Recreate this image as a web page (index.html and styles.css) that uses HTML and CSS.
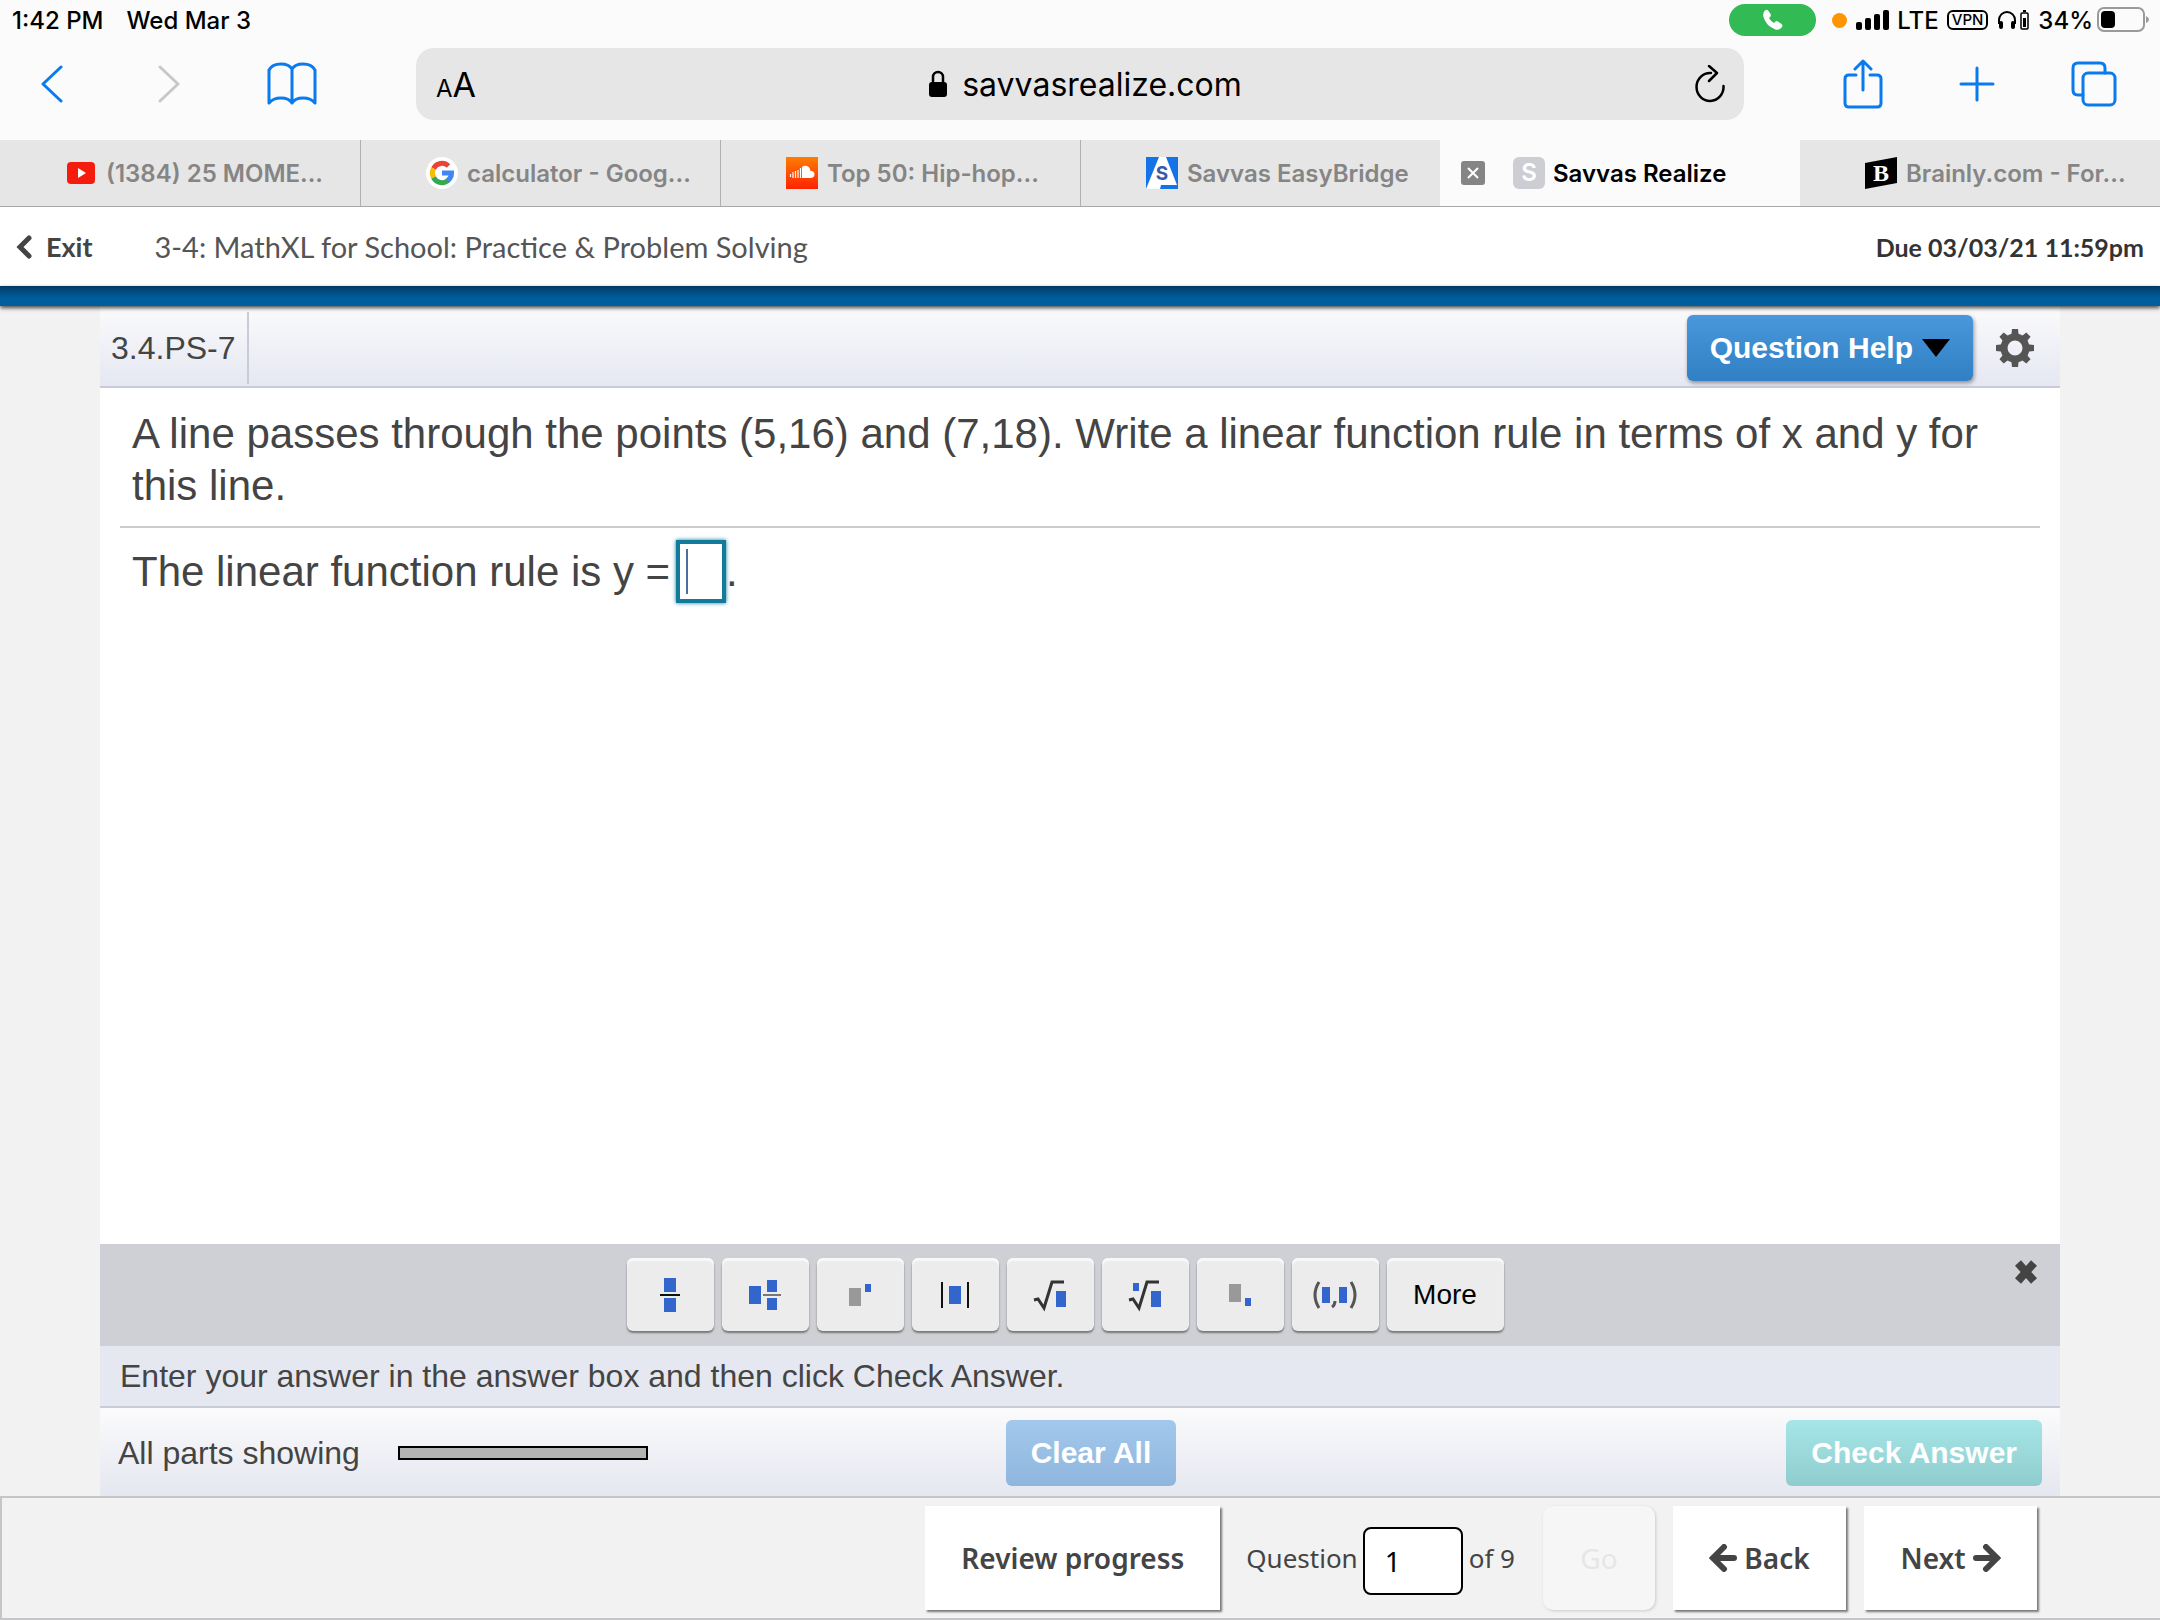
FILE: index.html
```html
<!DOCTYPE html>
<html lang="en">
<head>
  <meta charset="utf-8">
  <meta name="viewport" content="width=device-width, initial-scale=1">
  <title>Savvas Realize</title>
  <link rel="stylesheet" href="styles.css">
</head>
<body>

<!-- tablet status bar -->
<div class="status">
  <span>1:42 PM</span>
  <span class="date">Wed Mar 3</span>
  <div class="status-right">
    <span class="call">
      <svg width="22" height="22" viewBox="0 0 22 22"><path d="M3 1.500q2-1.500 3.500.5l2 3q1 1.500-.5 3l-1 1q2 3.500 5 5l1-1q1.500-1.500 3-.5l3.500 2.500q1.800 1.500.3 3.200Q17 21.500 13.500 20.500 4 17 1.500 8 .5 3.500 3 1.500z" fill="#fff"/></svg>
    </span>
    <span class="dot"></span>
    <svg width="34" height="22" viewBox="0 0 34 22"><rect x="1" y="13" width="6" height="8" rx="2"/><rect x="10" y="9" width="6" height="12" rx="2"/><rect x="19" y="5" width="6" height="16" rx="2"/><rect x="28" y="1" width="6" height="20" rx="2"/></svg>
    <span>LTE</span>
    <span class="vpn">VPN</span>
    <svg width="34" height="22" viewBox="0 0 34 22"><path d="M3 15v-4a8 8 0 0 1 16 0v4" fill="none" stroke="#000" stroke-width="2"/><rect x="3" y="12" width="4" height="8" rx="2"/><rect x="15" y="12" width="4" height="8" rx="2"/><rect x="25" y="4" width="7" height="16" rx="1" fill="none" stroke="#000" stroke-width="1.500"/><rect x="27" y="9" width="3" height="9"/><rect x="27" y="1" width="3" height="2"/></svg>
    <span>34%</span>
    <svg class="battery" width="53" height="26" viewBox="0 0 53 26"><rect x="1" y="1" width="46" height="23" rx="6" fill="none" stroke="#9a9a9a" stroke-width="2"/><rect x="4" y="4" width="14" height="17" rx="4"/><path d="M49 9q3 1.500 3 3.500t-3 3.500z" fill="#9a9a9a"/></svg>
  </div>
</div>

<!-- browser toolbar -->
<div class="toolbar">
  <div class="nav-left">
    <button class="icon" aria-label="Back"><svg width="24" height="38" viewBox="0 0 24 38"><path d="M21 2L3 19l18 17" class="line"/></svg></button>
    <button class="icon" aria-label="Forward" disabled><svg width="24" height="38" viewBox="0 0 24 38"><path d="M3 2l18 17L3 36" class="line gray"/></svg></button>
    <button class="icon" aria-label="Bookmarks"><svg width="50" height="44" viewBox="0 0 50 44"><path d="M25 7q-3-5-11-5-9 0-12 6v33q4-5 12-5 8 0 11 5 3-5 11-5 8 0 12 5V8q-3-6-12-6-8 0-11 5zv34" class="line"/></svg></button>
  </div>
  <div class="address">
    <button class="aa" aria-label="Page settings"><small>A</small>A</button>
    <a class="url" href="#">
      <svg width="20" height="28" viewBox="0 0 20 28"><rect x="1" y="12" width="18" height="15" rx="3"/><path d="M5 13V7a5 5 0 0 1 10 0v6" fill="none" stroke="#000" stroke-width="2.500"/></svg>
      savvasrealize.com
    </a>
    <button class="icon" aria-label="Reload"><svg width="32" height="38" viewBox="0 0 32 38"><path d="M17 8a13.500 14 0 1 0 12.500 13M15 1l8 7-8 8" fill="none" stroke="#000" stroke-width="2.500" stroke-linecap="round" stroke-linejoin="round"/></svg></button>
  </div>
  <div class="nav-right">
    <button class="icon" aria-label="Share"><svg width="40" height="50" viewBox="0 0 40 50"><path d="M13 16H6q-4 0-4 4v24q0 4 4 4h28q4 0 4-4V20q0-4-4-4h-7M20 31V2M12 10l8-8 8 8" class="line"/></svg></button>
    <button class="icon" aria-label="New tab"><svg width="36" height="36" viewBox="0 0 36 36"><path d="M18 2v32M2 18h32" class="line"/></svg></button>
    <button class="icon" aria-label="Show tabs"><svg width="46" height="46" viewBox="0 0 46 46"><rect x="12" y="12" width="32" height="32" rx="5" class="line"/><path d="M12 34H7q-5 0-5-5V7q0-5 5-5h22q5 0 5 5v5" class="line"/></svg></button>
  </div>
</div>

<div class="tabs">
  <a class="tab" href="#">
    <svg width="32" height="32" viewBox="0 0 32 32"><rect x="2" y="5" width="28" height="22" rx="4" fill="#f61c0d"/><path d="M13 11l8 5-8 5z" fill="#fff"/></svg>
    (1384) 25 MOME...
  </a>
  <a class="tab" href="#">
    <svg width="32" height="32" viewBox="0 0 32 32"><circle cx="16" cy="16" r="16" fill="#fff"/><g fill="none" stroke-width="5"><path d="M7.500 11.500A9.500 9.500 0 0 1 22.500 9" stroke="#ea4335"/><path d="M7.500 20.500a9.500 9.500 0 0 1 0-9" stroke="#fbbc05"/><path d="M22.500 23a9.500 9.500 0 0 1-15-2.500" stroke="#34a853"/><path d="M16 16h9.500q0 4.500-3.500 7.500" stroke="#4285f4"/></g></svg>
    calculator - Goog...
  </a>
  <a class="tab" href="#">
    <svg width="32" height="32" viewBox="0 0 32 32"><defs><linearGradient id="sc" x2="0" y2="1"><stop stop-color="#ff7d00"/><stop offset="1" stop-color="#ff2200"/></linearGradient></defs><rect width="32" height="32" fill="url(#sc)"/><path d="M4.500 17v3M7 15v6M9.500 14v7M12 13v8M14.500 11v10" stroke="#fff" stroke-width="1.200"/><path d="M16 21V10q2-2 5-1 3 1 3.500 5 4-.5 4 3.500 0 3-3.500 3.500z" fill="#fff"/></svg>
    Top 50: Hip-hop...
  </a>
  <a class="tab" href="#">
    <svg width="32" height="32" viewBox="0 0 32 32"><rect width="32" height="32" fill="#1473e6"/><path d="M13 0h7l11 28H15l-1 4H0z" fill="#fff"/><text x="16" y="23" text-anchor="middle" class="fav-s">S</text></svg>
    Savvas EasyBridge
  </a>
  <div class="tab active">
    <button class="close" aria-label="Close tab"><svg width="24" height="24" viewBox="0 0 24 24"><rect width="24" height="24" rx="3" fill="#858585"/><path d="M7 7l10 10M17 7L7 17" stroke="#fff" stroke-width="2"/></svg></button>
    <a class="tab-link" href="#"><span class="letter">S</span>Savvas Realize</a>
  </div>
  <a class="tab" href="#">
    <svg width="32" height="32" viewBox="0 0 32 32"><path d="M0 6L32 0v26L0 32z"/><text x="16" y="24" text-anchor="middle" class="fav-b">B</text></svg>
    Brainly.com - For...
  </a>
</div>

<header class="course">
  <a class="exit" href="#"><svg width="16" height="24" viewBox="0 0 16 24"><path d="M13 3L4 12l9 9" fill="none" stroke="#444" stroke-width="5" stroke-linecap="round"/></svg>Exit</a>
  <span class="title">3-4: MathXL for School: Practice &amp; Problem Solving</span>
  <span class="due">Due 03/03/21 11:59pm</span>
</header>
<div class="blue-bar"></div>

<main class="player">
  <div class="player-head">
    <span class="exercise">3.4.PS-7</span>
    <button class="btn help">Question Help <svg width="28" height="18" viewBox="0 0 28 18"><path d="M0 0h28L14 18z"/></svg></button>
    <button class="icon" aria-label="Settings"><svg width="40" height="40" viewBox="0 0 40 40"><g fill="#555"><path id="tooth" d="M17 1h6l1 9h-8zM17 39h6l1-9h-8z"/><use href="#tooth" transform="rotate(45 20 20)"/><use href="#tooth" transform="rotate(90 20 20)"/><use href="#tooth" transform="rotate(135 20 20)"/></g><circle cx="20" cy="20" r="11" fill="none" stroke="#555" stroke-width="7"/></svg></button>
  </div>

  <section class="question">
    <p>A line passes through the points (5,16) and (7,18). Write a linear function rule in terms of x and y for this line.</p>
    <hr>
    <div class="answer">
      <label for="answer">The linear function rule is y =</label>
      <span class="field"><input id="answer" type="text"></span>.
    </div>
  </section>

  <div class="palette">
    <div class="keys">
      <button class="key" aria-label="Fraction"><svg width="40" height="40" viewBox="0 0 40 40"><path d="M14 3h12v14H14zM14 23h12v14H14z" class="b"/><path d="M10 20h20" class="k"/></svg></button>
      <button class="key" aria-label="Mixed number"><svg width="40" height="40" viewBox="0 0 40 40"><path d="M4 11h12v18H4zM22 5h10v12H22zM22 23h10v12H22z" class="b"/><path d="M18 20h18" class="k g"/></svg></button>
      <button class="key" aria-label="Exponent"><svg width="40" height="40" viewBox="0 0 40 40"><path d="M9 13h12v18H9z" fill="#999"/><path d="M25 9h6v8h-6z" class="b"/></svg></button>
      <button class="key" aria-label="Absolute value"><svg width="40" height="40" viewBox="0 0 40 40"><path d="M14 11h12v18H14z" class="b"/><path d="M7 7v26M33 7v26" class="k"/></svg></button>
      <button class="key" aria-label="Square root"><svg width="40" height="40" viewBox="0 0 40 40"><path d="M26 16h10v16H26z" class="b"/><path d="M4 25l4-1 6 9 8-26h12" class="k r"/></svg></button>
      <button class="key" aria-label="Nth root"><svg width="40" height="40" viewBox="0 0 40 40"><path d="M26 16h10v16H26zM8 8h6v8H8z" class="b"/><path d="M4 25l4-1 6 9 8-26h12" class="k r"/></svg></button>
      <button class="key" aria-label="Subscript"><svg width="40" height="40" viewBox="0 0 40 40"><path d="M9 9h12v18H9z" fill="#999"/><path d="M25 23h6v8h-6z" class="b"/></svg></button>
      <button class="key" aria-label="Ordered pair"><svg width="44" height="40" viewBox="0 0 44 40"><path d="M9 12h8v16H9zM26 12h8v16h-8z" class="b"/><path d="M6 7q-8 13 0 26M38 7q8 13 0 26" class="k p"/><path d="M22 26q0 4-3 6" class="k p"/></svg></button>
      <button class="key more">More</button>
    </div>
    <button class="icon dismiss" aria-label="Close palette"><svg width="24" height="24" viewBox="0 0 24 24"><path d="M4 3l16 18M20 3L4 21" stroke="#444" stroke-width="8"/></svg></button>
  </div>

  <div class="hint">Enter your answer in the answer box and then click Check Answer.</div>

  <div class="player-foot">
    <div class="parts">All parts showing <span class="meter"></span></div>
    <button class="btn clear">Clear All</button>
    <button class="btn check">Check Answer</button>
  </div>
</main>

<footer class="pager">
  <button class="page-btn review">Review progress</button>
  <label for="number">Question</label>
  <input id="number" type="text" value="1">
  <span class="total">of 9</span>
  <button class="page-btn go" disabled>Go</button>
  <button class="page-btn"><svg width="28" height="28" viewBox="0 0 28 28"><path d="M15 3L4 14l11 11M4 14h21" class="arrow"/></svg>Back</button>
  <button class="page-btn">Next<svg width="28" height="28" viewBox="0 0 28 28"><path d="M13 3l11 11-11 11M24 14H3" class="arrow"/></svg></button>
</footer>

</body>
</html>
```
FILE: styles.css
```css
* {
  box-sizing: border-box;
}

body {
  margin: 0;
  min-height: 100vh;
  display: flex;
  flex-direction: column;
  font-family: "Liberation Sans", Arial, sans-serif;
  color: #444;
  background: #f2f2f2;
}

button {
  font-family: inherit;
  color: inherit;
  border: none;
  padding: 0;
  cursor: pointer;
}

a {
  color: inherit;
  text-decoration: none;
}

svg {
  display: block;
  flex: none;
}

.icon {
  background: none;
}

.line {
  fill: none;
  stroke: #0a7aef;
  stroke-width: 3;
  stroke-linecap: round;
  stroke-linejoin: round;
}

.gray {
  stroke: #c8c8c8;
}

/* status bar */
.status {
  display: flex;
  align-items: center;
  height: 40px;
  padding: 0 10px 0 12px;
  font-family: Inter, sans-serif;
  font-size: 24px;
  font-weight: 500;
  color: #000;
  background: #fbfbfb;
}

.date {
  margin-left: 23px;
}

.status-right {
  display: flex;
  align-items: center;
  gap: 8px;
  margin-left: auto;
}

.call {
  display: flex;
  align-items: center;
  justify-content: center;
  width: 87px;
  height: 32px;
  margin-right: 8px;
  border-radius: 16px;
  background: #32ba55;
}

.dot {
  width: 15px;
  height: 15px;
  border-radius: 50%;
  background: #ff9500;
}

.vpn {
  padding: 0 3px;
  border: 2px solid #000;
  border-radius: 6px;
  font-size: 15px;
  line-height: 16px;
}

.battery {
  margin-left: -4px;
}

/* browser toolbar */
.toolbar {
  display: flex;
  align-items: center;
  height: 100px;
  padding: 0 43px 12px 40px;
  background: #fbfbfb;
}

.nav-left {
  display: flex;
  align-items: center;
  gap: 86px;
  width: 376px;
}

.nav-left .icon:nth-child(2) {
  margin-left: 7px;
}

.address {
  flex: 1;
  display: flex;
  align-items: center;
  justify-content: space-between;
  height: 72px;
  padding: 0 18px 0 20px;
  border-radius: 18px;
  font-family: Inter, sans-serif;
  font-size: 32px;
  color: #000;
  background: #e6e6e6;
}

.aa {
  background: none;
  font-size: 34px;
}

.aa small {
  font-size: 24px;
}

.url {
  display: flex;
  align-items: center;
  gap: 14px;
}

.nav-right {
  display: flex;
  align-items: center;
  justify-content: space-between;
  width: 373px;
  padding-left: 99px;
}

/* tabs */
.tabs {
  display: grid;
  grid-template-columns: repeat(6, 1fr);
  height: 67px;
  border-bottom: 1px solid #a8a8a8;
  font-family: Inter, sans-serif;
  font-size: 24px;
  font-weight: 600;
  color: #858585;
  background: #e6e6e6;
}

.tab {
  display: flex;
  align-items: center;
  gap: 9px;
  padding-left: 65px;
  white-space: nowrap;
  border-left: 1px solid #b0b0b0;
}

.tab:first-child,
.tab:last-child {
  border-left: none;
}

.active {
  gap: 28px;
  padding-left: 21px;
  border-left: none;
  color: #000;
  background: #fbfbfb;
}

.close {
  background: none;
}

.tab-link {
  display: flex;
  align-items: center;
  gap: 8px;
}

.letter {
  width: 32px;
  border-radius: 6px;
  line-height: 32px;
  text-align: center;
  color: #fff;
  background: #cdcdd4;
}

.fav-s {
  font-size: 19px;
  font-weight: bold;
  fill: #3a5aa8;
}

.fav-b {
  font-family: "Liberation Serif", serif;
  font-size: 24px;
  font-weight: bold;
  fill: #fff;
}

/* course header */
.course {
  display: flex;
  align-items: center;
  height: 79px;
  padding: 0 16px;
  font-family: Lato, sans-serif;
  font-size: 29px;
  color: #555;
  background: #fff;
}

.exit {
  display: flex;
  align-items: center;
  gap: 14px;
  font-size: 27px;
  font-weight: bold;
  color: #444;
}

.title {
  margin-left: 62px;
}

.due {
  margin-left: auto;
  font-size: 25px;
  font-weight: bold;
  color: #333;
}

.blue-bar {
  height: 20px;
  background: linear-gradient(#003a63, #005e9f 60%);
  box-shadow: 0 2px 4px rgba(0, 0, 0, 0.7);
  z-index: 1;
}

/* exercise player */
.player {
  flex: 1;
  display: flex;
  flex-direction: column;
  margin: 0 100px;
  background: #fff;
}

.player-head {
  display: flex;
  align-items: center;
  height: 82px;
  padding: 6px 25px 2px 0;
  border-bottom: 2px solid #c9ccd8;
  background: linear-gradient(#fbfbfc, #e5e7f2);
}

.exercise {
  padding: 0 11px;
  border-right: 2px solid #c9ccd8;
  font-size: 32px;
  line-height: 72px;
}

.btn {
  height: 66px;
  padding: 0 25px;
  border-radius: 6px;
  font-size: 30px;
  font-weight: bold;
  color: #fff;
}

.help {
  display: flex;
  align-items: center;
  gap: 9px;
  margin: 0 22px 0 auto;
  padding: 0 23px;
  background: linear-gradient(#4a97db, #3180c4);
  box-shadow: 1px 2px 4px rgba(0, 0, 0, 0.4);
}

.question {
  flex: 1;
  padding: 0 20px;
  font-size: 42px;
  line-height: 52px;
}

.question p {
  margin: 20px 12px 14px;
}

.question hr {
  margin: 0;
  border: none;
  border-top: 2px solid #ccc;
}

.answer {
  display: flex;
  align-items: center;
  margin: 12px;
}

.field {
  display: flex;
  margin-left: 6px;
  width: 50px;
  height: 63px;
  padding: 5px 6px;
  border: 4px solid #147a9c;
  background: #fff;
  box-shadow: 0 0 4px #147a9c;
}

.field input {
  width: 100%;
  padding: 0;
  border: none;
  border-left: 2px solid #4a6f9c;
  outline: none;
  font: inherit;
  color: inherit;
}

/* math keys */
.palette {
  display: grid;
  grid-template-columns: 1fr auto 1fr;
  height: 102px;
  padding: 14px 22px 0;
  background: #cfd0d6;
}

.keys {
  grid-column: 2;
  display: flex;
  gap: 8px;
  margin-right: 30px;
}

.key {
  display: flex;
  align-items: center;
  justify-content: center;
  width: 87px;
  height: 73px;
  border-radius: 6px;
  background: #ececec;
  box-shadow: inset 0 3px 1px #f8f8f8, 0 2px 2px #777;
}

.more {
  width: 117px;
  font-size: 28px;
  color: #000;
}

.b {
  fill: #3366cc;
}

.k {
  fill: none;
  stroke: #111;
  stroke-width: 2;
}

.g {
  stroke: #777;
}

.r {
  stroke: #333;
  stroke-width: 3;
}

.p {
  stroke: #555;
  stroke-width: 3;
}

.dismiss {
  justify-self: end;
  align-self: start;
  padding-top: 2px;
}

.hint {
  padding-left: 20px;
  border-bottom: 2px solid #c9ccd8;
  font-size: 32px;
  line-height: 60px;
  background: #e5e8f1;
}

.player-foot {
  display: grid;
  grid-template-columns: 1fr auto 1fr;
  align-items: center;
  height: 88px;
  padding: 2px 18px 0;
  background: linear-gradient(#fbfbfc, #e5e7f0);
}

.parts {
  display: flex;
  align-items: center;
  gap: 38px;
  font-size: 32px;
}

.meter {
  width: 250px;
  height: 14px;
  border: 2px solid #000;
  background: #b3b3b3;
}

.clear {
  margin-left: 22px;
  background: linear-gradient(#a3c8ed, #8fb6de);
}

.check {
  justify-self: end;
  background: linear-gradient(#a6e6e8, #90cccd);
}

/* question pager */
.pager {
  display: flex;
  align-items: center;
  justify-content: flex-end;
  height: 124px;
  padding-right: 123px;
  border: 2px solid #c6c6c9;
  border-right: none;
  font-family: "Noto Sans", sans-serif;
  font-size: 26px;
}

.page-btn {
  display: flex;
  align-items: center;
  justify-content: center;
  gap: 7px;
  width: 173px;
  height: 104px;
  margin-left: 18px;
  font-size: 28px;
  font-weight: 600;
  background: #fff;
  box-shadow: 2px 2px 2px #777;
}

.review {
  width: 295px;
  margin-right: 26px;
}

.pager input {
  width: 100px;
  height: 68px;
  margin: 6px 6px 0 5px;
  padding: 0 20px;
  border: 2px solid #000;
  border-radius: 8px;
  font: inherit;
  font-size: 28px;
  color: #000;
  background: #fff;
}

.go {
  width: 112px;
  margin-left: 28px;
  border-radius: 10px;
  font-weight: 400;
  color: #e6e6e6;
  background: #f6f6f6;
  box-shadow: 1px 1px 3px #ccc;
}

.arrow {
  fill: none;
  stroke: #444;
  stroke-width: 6;
  stroke-linecap: round;
}
```
